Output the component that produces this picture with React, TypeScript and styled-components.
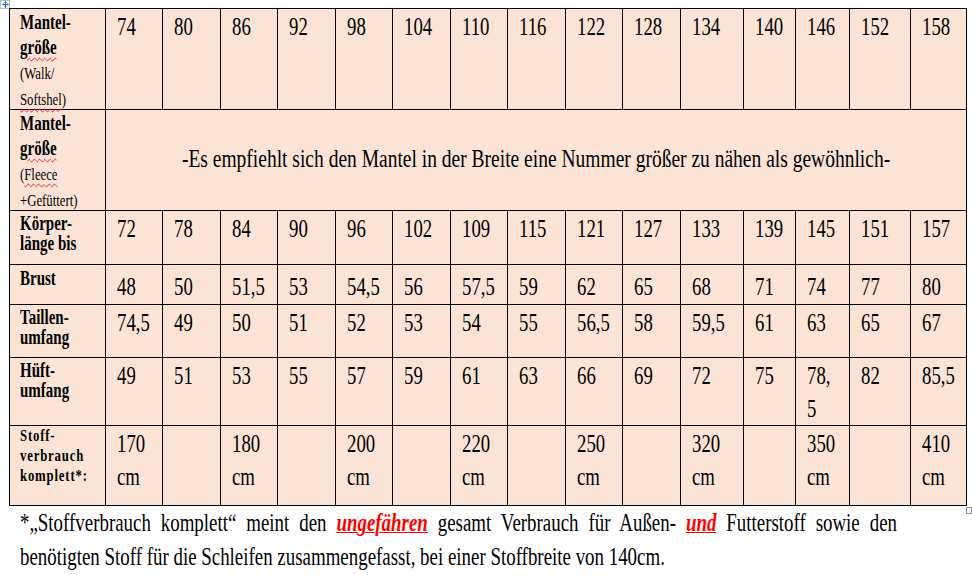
import React from "react";
import styled, { createGlobalStyle } from "styled-components";

const GlobalStyle = createGlobalStyle`
  body {
    margin: 0;
    background: #fff;
    color: #000;
    font-family: "Liberation Serif", "Times New Roman", serif;
  }
`;

const Page = styled.div`
  position: relative;
  padding: 8px 0 0 9px;
  overflow: hidden;
`;

const MoveHandle = styled.div`
  position: absolute;
  left: 0;
  top: 0;
  width: 8px;
  height: 7px;
  border: 1px solid #b4bfcc;
  background: #fff;
  display: flex;
  align-items: center;
  justify-content: center;
`;

const TableWrap = styled.div`
  position: relative;
  width: max-content;
`;

const ResizeHandle = styled.div`
  position: absolute;
  right: -5px;
  bottom: -8px;
  width: 4px;
  height: 5px;
  border: 1px solid #8c8c8c;
  background: #fff;
`;

const Table = styled.div`
  display: grid;
  grid-template-columns: 95px 56px 57px 56px 57px 56px 57px 56px 57px 56px 57px 62px 51px 53px 60px 55px;
  grid-template-rows: 100px 100px 53px 39px 52px 67px 79px;
  gap: 1px;
  padding: 1px;
  background: #000;
`;

const Cell = styled.div<{ $pad: number; $lh: number }>`
  background: #fbe4d5;
  padding: ${(p) => p.$pad}px 0 0 11px;
  font-size: 25px;
  line-height: ${(p) => p.$lh}px;
  overflow: visible;
  min-width: 0;
`;

const LabelCell = styled(Cell)<{ $size?: number; $spacing?: number }>`
  padding-left: 10px;
  font-size: ${(p) => p.$size ?? 20}px;
  font-weight: bold;
  letter-spacing: ${(p) => p.$spacing ?? 0}px;
`;

const BannerCell = styled.div`
  grid-column: 2 / -1;
  background: #fbe4d5;
  display: flex;
  align-items: center;
  justify-content: center;
  font-size: 25px;
  line-height: 30px;
  padding-bottom: 2px;
  overflow: hidden;
`;

const Narrow = styled.span<{ $center?: boolean; $scale?: number }>`
  display: inline-block;
  white-space: pre;
  transform: scaleX(${(p) => p.$scale ?? 0.75});
  transform-origin: ${(p) => (p.$center ? "center top" : "left top")};
`;

const Small = styled.span`
  font-size: 17px;
  font-weight: normal;
  letter-spacing: 0;
`;

const Misspelt = styled.span`
  text-decoration: underline wavy #e81123;
  text-decoration-thickness: 1px;
  text-underline-offset: 3px;
`;

const Note = styled.div`
  padding-left: 11px;
  font-size: 25px;
  line-height: 34px;
`;

const NoteLine = styled.span<{ $justify?: boolean }>`
  display: block;
  white-space: nowrap;
  width: ${(p) => (p.$justify ? "1160px" : "auto")};
  text-align: ${(p) => (p.$justify ? "justify" : "left")};
  text-align-last: ${(p) => (p.$justify ? "justify" : "auto")};
`;

const Emph = styled.span`
  color: #ff0000;
  font-weight: bold;
  font-style: italic;
  text-decoration: underline;
  text-decoration-thickness: 1px;
`;

type Row = {
  label: React.ReactNode;
  values: string[];
  labelPad: number;
  labelLh: number;
  valuePad: number;
  labelSize?: number;
  labelSpacing?: number;
};

const rows: Row[] = [
  {
    label: (
      <>
        Mantel-
        <br />
        <Misspelt>größe</Misspelt>
        <br />
        <Small>(Walk/</Small>
        <br />
        <Small>
          <Misspelt>Softshel</Misspelt>)
        </Small>
      </>
    ),
    values: ["74", "80", "86", "92", "98", "104", "110", "116", "122", "128", "134", "140", "146", "152", "158"],
    labelPad: 1,
    labelLh: 25,
    valuePad: 1,
  },
  {
    label: (
      <>
        Körper-
        <br />
        länge bis
      </>
    ),
    values: ["72", "78", "84", "90", "96", "102", "109", "115", "121", "127", "133", "139", "145", "151", "157"],
    labelPad: 2,
    labelLh: 20,
    valuePad: 1,
  },
  {
    label: "Brust",
    values: ["48", "50", "51,5", "53", "54,5", "56", "57,5", "59", "62", "65", "68", "71", "74", "77", "80"],
    labelPad: 3,
    labelLh: 20,
    valuePad: 5,
  },
  {
    label: (
      <>
        Taillen-
        <br />
        umfang
      </>
    ),
    values: ["74,5", "49", "50", "51", "52", "53", "54", "55", "56,5", "58", "59,5", "61", "63", "65", "67"],
    labelPad: 2,
    labelLh: 20,
    valuePad: 1,
  },
  {
    label: (
      <>
        Hüft-
        <br />
        umfang
      </>
    ),
    values: ["49", "51", "53", "55", "57", "59", "61", "63", "66", "69", "72", "75", "78,\n5", "82", "85,5"],
    labelPad: 2,
    labelLh: 20,
    valuePad: 1,
  },
  {
    label: (
      <>
        Stoff-
        <br />
        verbrauch
        <br />
        komplett*:
      </>
    ),
    values: ["170\ncm", "", "180\ncm", "", "200\ncm", "", "220\ncm", "", "250\ncm", "", "320\ncm", "", "350\ncm", "", "410\ncm"],
    labelPad: 0,
    labelLh: 20,
    valuePad: 1,
    labelSize: 17,
    labelSpacing: 1.1,
  },
];

function MoveIcon() {
  return (
    <svg width="7" height="7" viewBox="0 0 7 7" fill="none" stroke="#2f6fbf" strokeWidth="1">
      <path d="M3.5 0.5v6M0.5 3.5h6" />
      <path d="M2.5 1.5l1-1 1 1M2.5 5.5l1 1 1-1M1.5 2.5l-1 1 1 1M5.5 2.5l1 1-1 1" />
    </svg>
  );
}

function DataRow({ row }: { row: Row }) {
  return (
    <>
      <LabelCell $pad={row.labelPad} $lh={row.labelLh} $size={row.labelSize} $spacing={row.labelSpacing}>
        <Narrow>{row.label}</Narrow>
      </LabelCell>
      {row.values.map((v, i) => (
        <Cell key={i} $pad={row.valuePad} $lh={33}>
          <Narrow>{v}</Narrow>
        </Cell>
      ))}
    </>
  );
}

export default function App() {
  const [first, ...rest] = rows;
  return (
    <Page>
      <GlobalStyle />
      <MoveHandle>
        <MoveIcon />
      </MoveHandle>
      <TableWrap>
        <Table>
          <DataRow row={first} />
          <LabelCell $pad={1} $lh={25}>
            <Narrow>
              Mantel-
              <br />
              <Misspelt>größe</Misspelt>
              <br />
              <Small>
                (<Misspelt>Fleece</Misspelt>
              </Small>
              <br />
              <Small>+Gefüttert)</Small>
            </Narrow>
          </LabelCell>
          <BannerCell>
            <Narrow $center $scale={0.78}>
              -Es empfiehlt sich den Mantel in der Breite eine Nummer größer zu nähen als gewöhnlich-
            </Narrow>
          </BannerCell>
          {rest.map((row, i) => (
            <DataRow key={i} row={row} />
          ))}
        </Table>
        <ResizeHandle />
      </TableWrap>
      <Note>
        <Narrow $scale={0.756}>
          <NoteLine $justify>
            *„Stoffverbrauch komplett“ meint den <Emph>ungefähren</Emph> gesamt Verbrauch für Außen-{" "}
            <Emph>und</Emph> Futterstoff sowie den
          </NoteLine>
          <NoteLine>
            benötigten Stoff für die Schleifen zusammengefasst, bei einer Stoffbreite von 140cm.
          </NoteLine>
        </Narrow>
      </Note>
    </Page>
  );
}
